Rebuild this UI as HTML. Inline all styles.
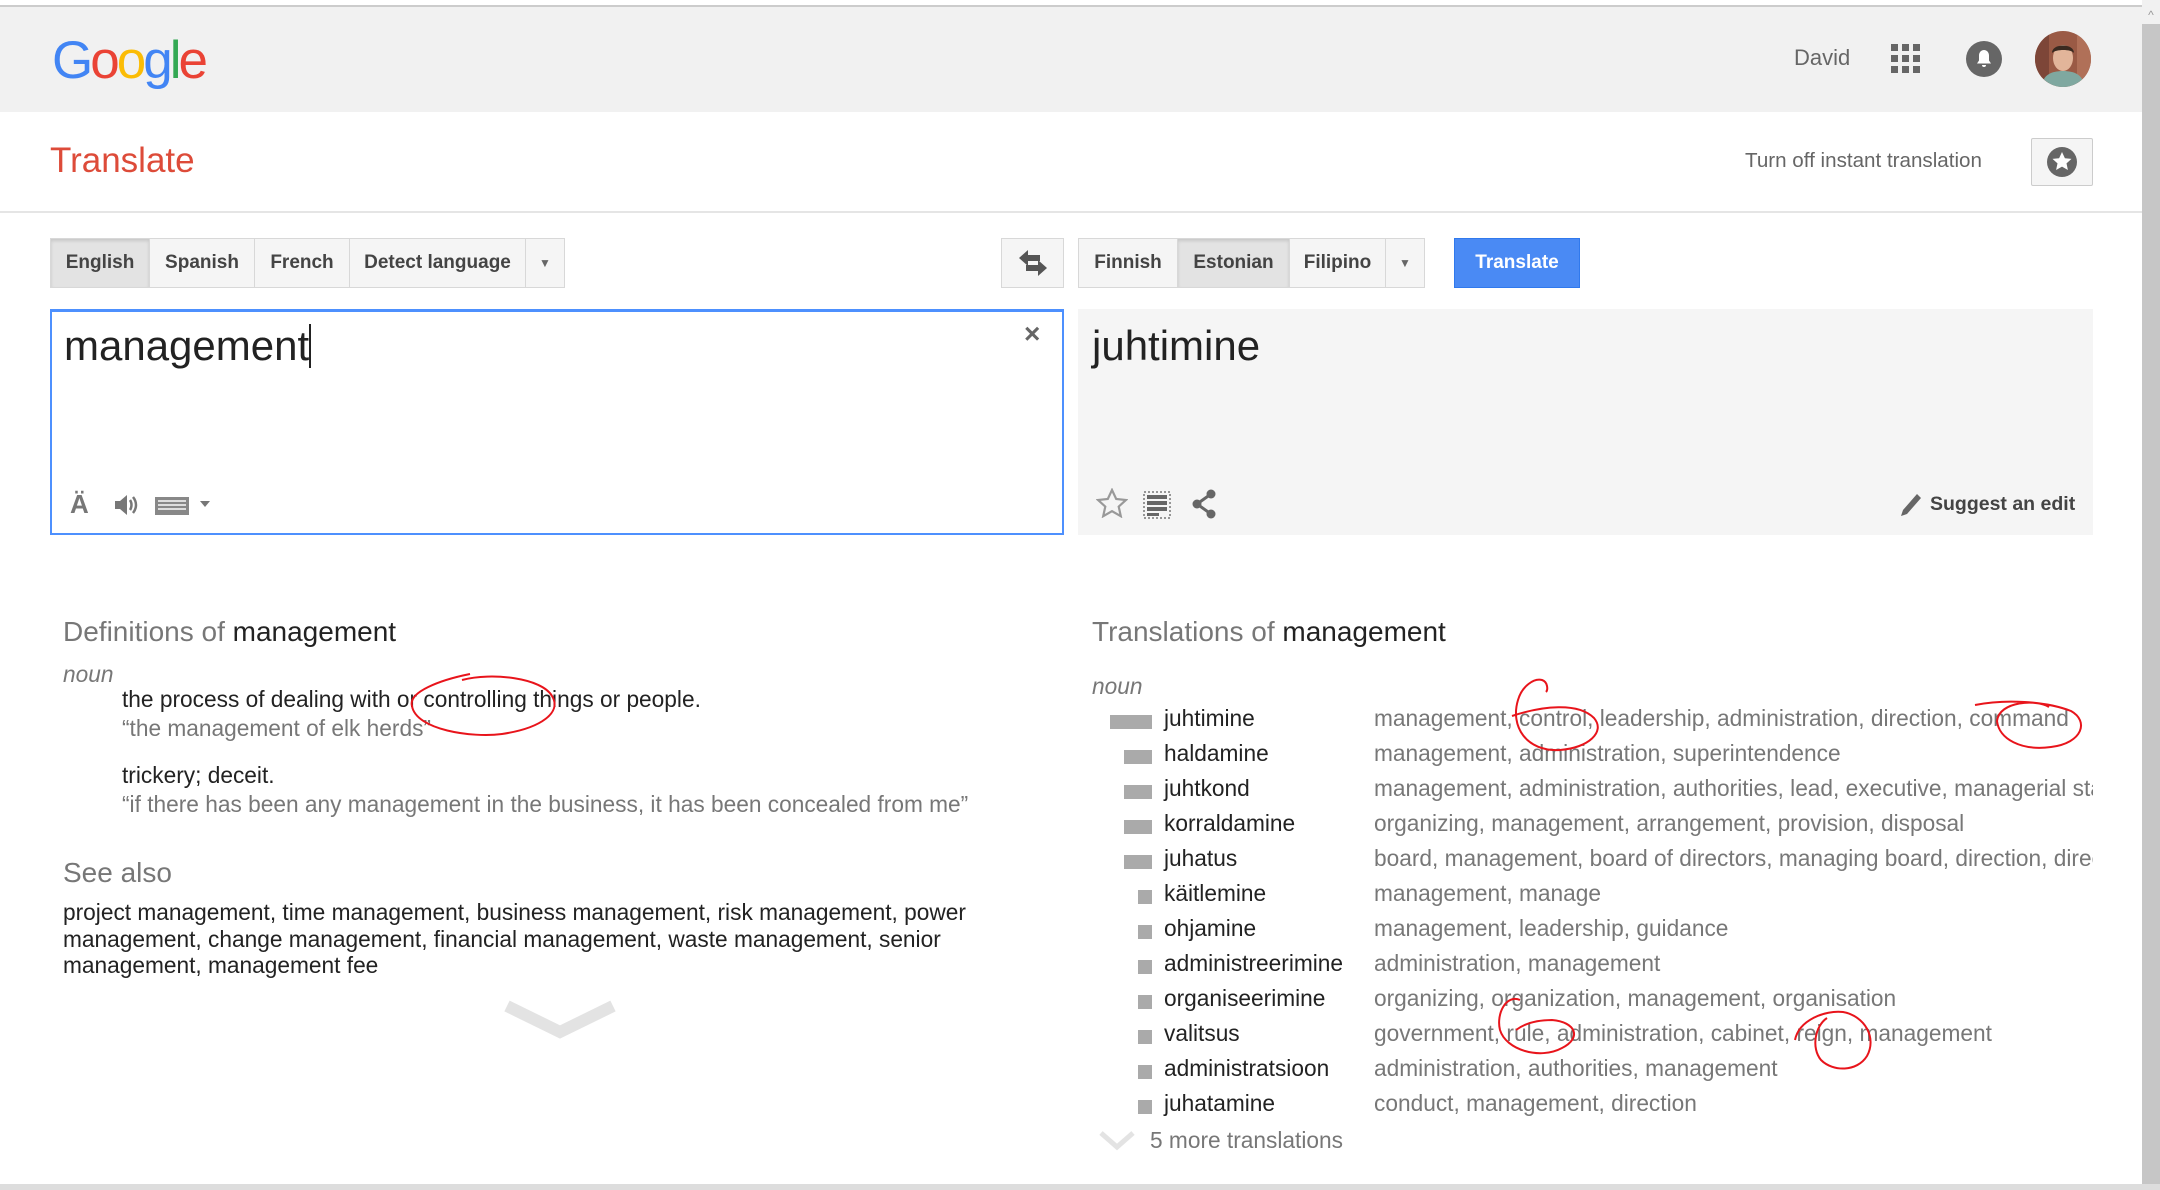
<!DOCTYPE html>
<html><head><meta charset="utf-8"><style>
*{margin:0;padding:0;box-sizing:border-box}
body{width:2160px;height:1190px;overflow:hidden;background:#fff;font-family:"Liberation Sans",Arial,sans-serif;position:relative;color:#222}
.a{position:absolute;white-space:nowrap}
.hdr{left:0;top:0;width:2142px;height:112px;background:#f1f1f1;border-top:6px solid #fff}
.topl{left:0;top:5px;width:2142px;height:2px;background:#ccc}
.btn{position:absolute;top:238px;height:50px;border:1px solid #d8d8d8;background:#f5f5f5;font-size:19px;font-weight:bold;color:#444;display:flex;align-items:center;justify-content:center}
.sel{background:#e3e3e3;box-shadow:inset 0 2px 3px rgba(0,0,0,.12)}
.row{position:absolute;left:1093px;width:1000px;height:35px;font-size:22.7px;overflow:hidden;white-space:nowrap}
.row .bar{position:absolute;top:10px;height:14px;background:#aaa;right:941px}
.row .w{position:absolute;left:71px;color:#222}
.row .t{position:absolute;left:281px;color:#777;white-space:nowrap}
.d{font-size:22.7px}
</style></head><body>
<div class="a hdr"></div>
<div class="a topl"></div>
<div class="a" style="left:2142px;top:0;width:18px;height:1190px;background:#c6c6c6"></div>
<div class="a" style="left:2142px;top:0;width:18px;height:24px;background:#f1f1f1;font-size:12px;color:#999;text-align:center;line-height:30px">^</div>
<div class="a" style="left:0;top:1184px;width:2160px;height:6px;background:#ddd"></div>

<div class="a" style="left:52px;top:30px;font-size:53px;letter-spacing:-3px;font-family:'Liberation Sans',sans-serif"><span style="color:#4285f4">G</span><span style="color:#ea4335">o</span><span style="color:#fbbc05">o</span><span style="color:#4285f4">g</span><span style="color:#34a853">l</span><span style="color:#ea4335">e</span></div>
<div class="a" style="left:1794px;top:45px;font-size:22px;color:#666">David</div>
<svg class="a" style="left:1891px;top:44px" width="30" height="30" viewBox="0 0 30 30" fill="#666"><rect x="0" y="0" width="7" height="7"/><rect x="11" y="0" width="7" height="7"/><rect x="22" y="0" width="7" height="7"/><rect x="0" y="11" width="7" height="7"/><rect x="11" y="11" width="7" height="7"/><rect x="22" y="11" width="7" height="7"/><rect x="0" y="22" width="7" height="7"/><rect x="11" y="22" width="7" height="7"/><rect x="22" y="22" width="7" height="7"/></svg>
<svg class="a" style="left:1966px;top:41px" width="36" height="36" viewBox="0 0 36 36"><circle cx="18" cy="18" r="18" fill="#666"/><path d="M18 9c-3 0-5 2.5-5 5.5v5l-2 3h14l-2-3v-5C23 11.5 21 9 18 9z M16 24a2 2 0 0 0 4 0z" fill="#fff"/></svg>
<svg class="a" style="left:2035px;top:31px" width="56" height="56" viewBox="0 0 56 56"><defs><clipPath id="c"><circle cx="28" cy="28" r="28"/></clipPath></defs><g clip-path="url(#c)"><rect width="56" height="56" fill="#9a5a45"/><rect x="0" y="0" width="14" height="56" fill="#7d4638"/><rect x="42" y="0" width="14" height="56" fill="#b07058"/><path d="M6 56c2-12 10-16 22-16s20 4 22 16z" fill="#7fa8a0"/><ellipse cx="28" cy="27" rx="10" ry="13" fill="#e2b59a"/><path d="M17 22c0-10 22-10 22 0c-3-4-18-4-22 0z" fill="#3a2a20"/></g></svg>

<div class="a" style="left:50px;top:141px;font-size:35px;color:#dd4b39">Translate</div>
<div class="a" style="left:1745px;top:149px;font-size:20.6px;color:#666">Turn off instant translation</div>
<div class="a" style="left:2031px;top:138px;width:62px;height:48px;border:1px solid #ccc;background:#f5f5f5;border-radius:2px"></div>
<svg class="a" style="left:2046px;top:145px" width="32" height="34" viewBox="0 0 32 34"><circle cx="16" cy="17" r="15" fill="#666"/><path d="M16 7l2.9 6.2 6.6.7-5 4.5 1.4 6.6L16 21.6l-5.9 3.4 1.4-6.6-5-4.5 6.6-.7z" fill="#fff"/></svg>
<div class="a" style="left:0;top:211px;width:2142px;height:2px;background:#e5e5e5"></div>

<div class="btn sel" style="left:50px;width:100px">English</div>
<div class="btn" style="left:149px;width:106px">Spanish</div>
<div class="btn" style="left:254px;width:96px">French</div>
<div class="btn" style="left:349px;width:177px">Detect language</div>
<div class="btn" style="left:525px;width:40px;font-size:12px;color:#666">▼</div>
<div class="btn" style="left:1001px;width:63px"><svg width="32" height="28" viewBox="0 0 32 28" fill="#555"><path d="M2 9l9-8v5h12v6H11v5z"/><path d="M30 19l-9 8v-5H9v-6h12v-5z"/></svg></div>
<div class="btn" style="left:1078px;width:100px">Finnish</div>
<div class="btn sel" style="left:1177px;width:113px">Estonian</div>
<div class="btn" style="left:1289px;width:97px">Filipino</div>
<div class="btn" style="left:1385px;width:40px;font-size:12px;color:#666">▼</div>
<div class="btn" style="left:1454px;width:126px;background:#4a8af4;border-color:#3079ed;color:#fff">Translate</div>

<div class="a" style="left:50px;top:309px;width:1014px;height:226px;border:2px solid #4d90fe;border-top-width:3px"></div>
<div class="a" style="left:64px;top:322px;font-size:42px;color:#222">management<span style="display:inline-block;width:2px;height:44px;background:#222;vertical-align:-8px"></span></div>
<div class="a" style="left:1024px;top:318px;font-size:28px;color:#666;font-weight:bold">×</div>
<div class="a" style="left:70px;top:489px;font-size:26px;color:#777;font-weight:bold">Ä</div>
<svg class="a" style="left:112px;top:491px" width="28" height="28" viewBox="0 0 28 28" fill="#777"><path d="M3 10h5l7-6v20l-7-6H3z"/><path d="M18 9c2 3 2 7 0 10M21 6c4 5 4 11 0 16" stroke="#777" stroke-width="2.5" fill="none"/></svg>
<svg class="a" style="left:155px;top:495px" width="60" height="22" viewBox="0 0 60 22"><rect x="0" y="2" width="34" height="18" fill="#888"/><g fill="#ddd"><rect x="3" y="5" width="28" height="2"/><rect x="3" y="9" width="28" height="2"/><rect x="3" y="13" width="28" height="2"/></g><path d="M45 6h10l-5 6z" fill="#777"/></svg>

<div class="a" style="left:1078px;top:309px;width:1015px;height:226px;background:#f5f5f5"></div>
<div class="a" style="left:1092px;top:322px;font-size:42px;color:#222">juhtimine</div>
<svg class="a" style="left:1096px;top:488px" width="32" height="30" viewBox="0 0 32 30"><path d="M16 2l4.2 9 9.8 1-7.3 6.6 2.1 9.6L16 23.2l-8.8 5 2.1-9.6L2 12l9.8-1z" fill="none" stroke="#999" stroke-width="2.2"/></svg>
<svg class="a" style="left:1143px;top:491px" width="28" height="28" viewBox="0 0 28 28"><rect x="1" y="1" width="26" height="26" fill="none" stroke="#777" stroke-width="1.5" stroke-dasharray="2 2"/><g fill="#666"><rect x="4" y="4" width="20" height="4"/><rect x="4" y="10" width="20" height="4"/><rect x="4" y="16" width="20" height="4"/><rect x="4" y="22" width="12" height="3"/></g></svg>
<svg class="a" style="left:1191px;top:489px" width="26" height="30" viewBox="0 0 26 30"><path d="M20 5L6 15l14 10" stroke="#666" stroke-width="3" fill="none"/><circle cx="20" cy="5" r="4.5" fill="#666"/><circle cx="6" cy="15" r="4.5" fill="#666"/><circle cx="20" cy="25" r="4.5" fill="#666"/></svg>
<svg class="a" style="left:1899px;top:492px" width="24" height="26" viewBox="0 0 24 26"><path d="M18 2l4 4L8 22l-6 2 2-6z" fill="#666"/></svg>
<div class="a" style="left:1930px;top:493px;font-size:19.5px;font-weight:bold;color:#444">Suggest an edit</div>

<div class="a" style="left:63px;top:616px;font-size:28px;color:#777">Definitions of <span style="color:#222">management</span></div>
<div class="a d" style="left:63px;top:661px;color:#777;font-style:italic">noun</div>
<div class="a d" style="left:122px;top:686px;color:#222">the process of dealing with or controlling things or people.</div>
<div class="a d" style="left:122px;top:715px;color:#777">“the management of elk herds”</div>
<div class="a d" style="left:122px;top:762px;color:#222">trickery; deceit.</div>
<div class="a d" style="left:122px;top:791px;color:#777">“if there has been any management in the business, it has been concealed from me”</div>
<div class="a" style="left:63px;top:857px;font-size:28px;color:#777">See also</div>
<div class="a d" style="left:63px;top:899px;line-height:26.5px;color:#222;white-space:normal;width:940px">project management, time management, business management, risk management, power management, change management, financial management, waste management, senior management, management fee</div>
<svg class="a" style="left:503px;top:1000px" width="114" height="46" viewBox="0 0 114 46"><path d="M4 6l53 26 53-26" stroke="#e3e3e3" stroke-width="12" fill="none"/></svg>

<div class="a" style="left:1092px;top:616px;font-size:28px;color:#777">Translations of <span style="color:#222">management</span></div>
<div class="a d" style="left:1092px;top:673px;color:#777;font-style:italic">noun</div>
<div class="row" style="top:705px"><div class="bar" style="width:42px"></div><div class="w">juhtimine</div><div class="t">management, control, leadership, administration, direction, command</div></div>
<div class="row" style="top:740px"><div class="bar" style="width:28px"></div><div class="w">haldamine</div><div class="t">management, administration, superintendence</div></div>
<div class="row" style="top:775px"><div class="bar" style="width:28px"></div><div class="w">juhtkond</div><div class="t">management, administration, authorities, lead, executive, managerial staff</div></div>
<div class="row" style="top:810px"><div class="bar" style="width:28px"></div><div class="w">korraldamine</div><div class="t">organizing, management, arrangement, provision, disposal</div></div>
<div class="row" style="top:845px"><div class="bar" style="width:28px"></div><div class="w">juhatus</div><div class="t">board, management, board of directors, managing board, direction, directorate</div></div>
<div class="row" style="top:880px"><div class="bar" style="width:14px"></div><div class="w">käitlemine</div><div class="t">management, manage</div></div>
<div class="row" style="top:915px"><div class="bar" style="width:14px"></div><div class="w">ohjamine</div><div class="t">management, leadership, guidance</div></div>
<div class="row" style="top:950px"><div class="bar" style="width:14px"></div><div class="w">administreerimine</div><div class="t">administration, management</div></div>
<div class="row" style="top:985px"><div class="bar" style="width:14px"></div><div class="w">organiseerimine</div><div class="t">organizing, organization, management, organisation</div></div>
<div class="row" style="top:1020px"><div class="bar" style="width:14px"></div><div class="w">valitsus</div><div class="t">government, rule, administration, cabinet, reign, management</div></div>
<div class="row" style="top:1055px"><div class="bar" style="width:14px"></div><div class="w">administratsioon</div><div class="t">administration, authorities, management</div></div>
<div class="row" style="top:1090px"><div class="bar" style="width:14px"></div><div class="w">juhatamine</div><div class="t">conduct, management, direction</div></div>
<svg class="a" style="left:1098px;top:1130px" width="38" height="22" viewBox="0 0 38 22"><path d="M3 3l16 14 16-14" stroke="#e3e3e3" stroke-width="5" fill="none"/></svg>
<div class="a d" style="left:1150px;top:1127px;color:#777">5 more translations</div>

<svg class="a" style="left:0;top:0" width="2160" height="1190" viewBox="0 0 2160 1190" fill="none" stroke="#e8141b" stroke-width="2">
<path d="M470 674c-30 6-62 18-58 32 4 24 60 32 90 28 40-6 60-22 50-38-10-18-60-24-90-16"/>
<path d="M1512 716c30-10 66-14 82 2 12 14-6 30-34 32-34 2-50-24-42-50 4-14 16-22 24-20 6 2 6 10 4 12"/>
<path d="M1975 705c30-6 70-4 96 6 18 10 12 32-20 36-30 4-52-8-54-26 2-20 40-22 52-14"/>
<path d="M1520 1000c-14-6-24 14-20 30 6 20 40 30 62 18 20-10 14-26-10-28-16 0-28 4-36 10"/>
<path d="M1795 1040c4-20 30-30 48-28 22 4 34 26 24 44-10 16-34 16-46 4-10-12-6-34 6-42"/>
</svg>
</body></html>
